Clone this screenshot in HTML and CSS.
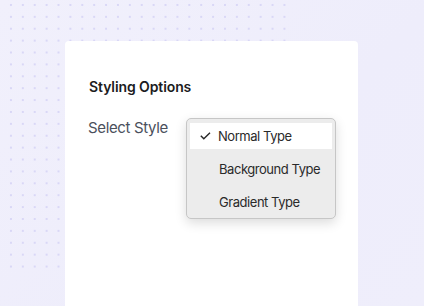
FILE: index.html
```html
<!DOCTYPE html>
<html>
<head>
<meta charset="utf-8">
<link rel="stylesheet" href="styles.css">
</head>
<body>
<div class="stage">
  <div class="dots"></div>
  <div class="card">
    <h2 class="title">Styling Options</h2>
    <div class="row">
      <span class="label">Select Style</span>
      <div class="menu">
        <div class="item selected">
          <svg class="check" width="11" height="8" viewBox="0 0 11 8"><polyline points="0.8,3.8 3.8,6.8 10,0.8" fill="none" stroke="#262626" stroke-width="1.4"/></svg>
          <span>Normal Type</span>
        </div>
        <div class="item"><span>Background Type</span></div>
        <div class="item"><span>Gradient Type</span></div>
      </div>
    </div>
  </div>
</div>
</body>
</html>
```
FILE: styles.css
```css
html, body {
  margin: 0;
  padding: 0;
}
body {
  width: 424px;
  height: 306px;
  overflow: hidden;
  background: linear-gradient(135deg, #f1f0fc 0%, #eeedfb 60%, #efeefb 100%);
  font-family: Inter, "Noto Sans", sans-serif;
}
.stage {
  position: relative;
  width: 424px;
  height: 306px;
  padding-top: 41px;
  box-sizing: border-box;
}
.dots {
  position: absolute;
  left: 5px;
  top: 0;
  width: 286px;
  height: 272px;
  background-image: radial-gradient(circle, #d9d7f6 1px, transparent 1.4px);
  background-size: 11.9px 11.9px;
  background-position: 0 -1px;
}
.card {
  position: relative;
  margin-left: 65px;
  width: 293px;
  height: 280px;
  background: #ffffff;
  border-radius: 4px;
  padding: 36px 0 0 24px;
  box-sizing: border-box;
}
.title {
  margin: 0;
  font-size: 14px;
  font-weight: 600;
  color: #1c1c1e;
  line-height: 20px;
  letter-spacing: -0.1px;
}
.row {
  display: flex;
  align-items: flex-start;
  margin-top: 20px;
}
.label {
  font-size: 15px;
  color: #4b505c;
  line-height: 20px;
  width: 98px;
  margin-top: 1px;
  margin-left: -1px;
  letter-spacing: -0.35px;
}
.menu {
  margin-top: 1px;
  width: 150px;
  box-sizing: border-box;
  background: #ececec;
  border: 1px solid #c6c6c6;
  border-radius: 5px;
  padding: 4px 3px 3px 3px;
  box-shadow: 0 4px 12px rgba(0, 0, 0, 0.14);
}
.item {
  height: 26px;
  display: flex;
  align-items: center;
  padding-left: 29px;
  position: relative;
  font-size: 13px;
  letter-spacing: -0.45px;
  color: #2a2a2a;
  margin-bottom: 7px;
}
.item:last-child {
  margin-bottom: 0;
}
.item.selected {
  background: #ffffff;
  padding-left: 28px;
}
.check {
  position: absolute;
  left: 10px;
  top: 9px;
}
```
